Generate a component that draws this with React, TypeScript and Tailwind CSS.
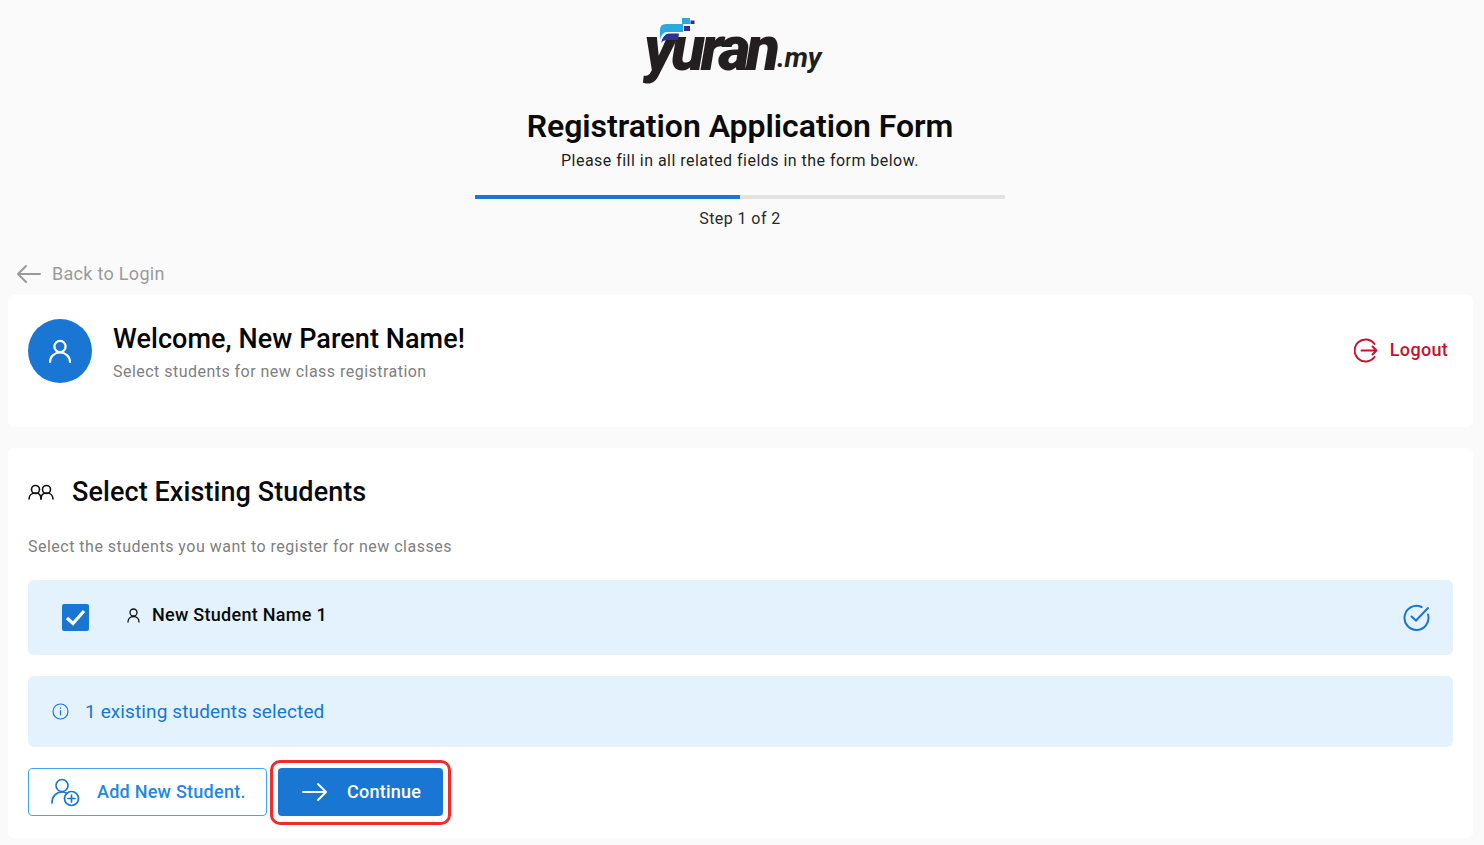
export default function App() {
  return (
    <div className="h-[845px] overflow-hidden bg-[#fafafa] pl-2 pr-[11px] font-['Roboto',sans-serif]">
      <div className="flex flex-col items-center pr-[1px]">
        <div className="relative mt-[18px] h-[57px] w-[180px] -translate-x-[7px]">
          <span className="absolute left-[1px] top-[-7px] text-[62px] leading-[76px] font-black italic tracking-[-4.200px] text-[#231f20]">yuran</span>
          <svg className="absolute left-0 top-0" width="60" height="30" viewBox="0 0 60 30">
            <path d="M17 22V12Q17 6 23 6H39V0H47V6H40V14H24Q19 14 17 22Z" fill="#29abe2" />
            <path d="M18 25Q20 16 26 15.500H36L35 22H25Q20 22 18 25Z" fill="#2e3192" />
            <rect x="41" y="8" width="6" height="5" fill="#2e3192" />
            <rect x="47.500" y="2.500" width="4" height="3.500" fill="#2e3192" />
          </svg>
          <span className="absolute left-[134px] top-[22px] text-[28px] leading-[36px] font-bold italic tracking-[-0.300px] text-[#231f20]">.my</span>
        </div>
        <h1 className="mt-[31px] text-[32px] leading-[40px] font-semibold tracking-[-0.03px] text-[#0b0b0b]">Registration Application Form</h1>
        <p className="mt-[5px] text-base leading-[20px] tracking-[0.47px] text-[#1f1f1f]">Please fill in all related fields in the form below.</p>
        <div className="mt-[24px] h-1 w-[530px] bg-[#e2e2e2]">
          <div className="h-1 w-1/2 bg-[#1976d2]" />
        </div>
        <p className="mt-[10px] text-base leading-[20px] tracking-[0.42px] text-[#2a2a2a]">Step 1 of 2</p>
      </div>

      <div className="mt-[33px] flex h-[24px] items-center gap-[11px] pl-[8px] text-[#9a9a9a]">
        <svg width="25" height="20" viewBox="0 0 25 20" fill="none" stroke="#9a9a9a" strokeWidth="2" strokeLinecap="round" strokeLinejoin="round">
          <path d="M24 10H2M10 2l-8 8 8 8" />
        </svg>
        <span className="text-lg leading-6 tracking-[0.3px]">Back to Login</span>
      </div>

      <section className="mt-[9px] flex h-[132px] rounded-md bg-white pl-5 pr-[25px] pt-6">
        <div className="flex h-16 w-16 shrink-0 items-center justify-center rounded-full bg-[#1976d2]">
          <svg width="24" height="26" viewBox="0 0 24 26" fill="none" stroke="white" strokeWidth="2.200" strokeLinecap="round">
            <circle cx="12" cy="8.500" r="5.600" />
            <path d="M2 24c0-5.500 4.500-9.500 10-9.500S22 18.500 22 24" />
          </svg>
        </div>
        <div className="ml-[21px] flex-1">
          <h2 className="mt-[3px] text-[27px] leading-[34px] font-medium tracking-[0.07px] text-[#050505]">Welcome, New Parent Name!</h2>
          <p className="mt-[6px] text-base leading-[20px] tracking-[0.47px] text-[#808080]">Select students for new class registration</p>
        </div>
        <div className="mt-[18px] flex h-[26px] items-center gap-[11px] text-[#c8102e]">
          <svg width="25" height="25" viewBox="0 0 25 25" fill="none" stroke="#c8102e" strokeWidth="2" strokeLinecap="round" strokeLinejoin="round">
            <path d="M20.500 6a11 11 0 1 0 0 13" />
            <path d="M7.500 12.500h15M18.500 8.500l4 4-4 4" />
          </svg>
          <span className="text-lg leading-6 font-medium tracking-[0.3px]">Logout</span>
        </div>
      </section>

      <section className="mt-[21px] h-[390px] rounded-md bg-white px-5 pt-[27px]">
        <div className="flex h-[34px] items-center gap-[18px]">
          <svg width="26" height="16" viewBox="0 0 26 16" fill="none" stroke="#111" strokeWidth="1.600" strokeLinecap="round">
            <circle cx="7.500" cy="5.500" r="4" />
            <path d="M1 15c0-4 3-6 6.500-6s5.500 2 5.500 6" />
            <circle cx="18.500" cy="5.500" r="4" />
            <path d="M13 15c0-4 2-6 5.500-6s6.500 2 6.500 6" />
          </svg>
          <h3 className="text-[27px] leading-[34px] font-medium tracking-[0.08px] text-[#0a0a0a]">Select Existing Students</h3>
        </div>
        <p className="mt-[28px] text-base leading-5 tracking-[0.49px] text-[#808080]">Select the students you want to register for new classes</p>

        <div className="mt-[23px] flex h-[75px] items-center rounded-md bg-[#e3f2fd] pl-[34px] pr-[23px]">
          <div className="flex h-[27px] w-[27px] items-center justify-center rounded-[2px] bg-[#1976d2]">
            <svg width="21" height="17" viewBox="0 0 21 17" fill="none" stroke="white" strokeWidth="3.200">
              <path d="M2 9l6 5.500L19 2" />
            </svg>
          </div>
          <svg className="ml-[38px] -mt-[4px]" width="13" height="15" viewBox="0 0 13 15" fill="none" stroke="#111" strokeWidth="1.300" strokeLinecap="round">
            <circle cx="6.500" cy="4.500" r="3.500" />
            <path d="M1 14c0-3.500 2.500-5.500 5.500-5.500S12 10.500 12 14" />
          </svg>
          <span className="ml-[12px] -mt-[5px] flex-1 text-lg leading-6 font-medium tracking-[0.28px] text-[#0a0a0a]">New Student Name 1</span>
          <svg width="27" height="27" viewBox="0 0 27 27" fill="none" stroke="#1976d2" strokeWidth="2" strokeLinecap="round">
            <path d="M25 10.500A12 12 0 1 1 18.500 3" />
            <path d="M8.500 12.500l4.500 4L25 4" />
          </svg>
        </div>

        <div className="mt-[21px] flex h-[71px] items-center rounded-md bg-[#e3f2fd] pl-6 text-[#1976d2]">
          <svg width="17" height="17" viewBox="0 0 17 17" fill="none" stroke="#1976d2" strokeWidth="1.200" strokeLinecap="round">
            <circle cx="8.500" cy="8.500" r="7.500" />
            <path d="M8.500 7.500v4.500M8.500 4.800v.4" />
          </svg>
          <span className="ml-[16px] text-[19px] leading-6 tracking-[0.12px]">1 existing students selected</span>
        </div>

        <div className="mt-[21px] flex items-start">
          <button className="flex h-[48px] w-[239px] items-center rounded-[4px] border border-[#42a5f5] bg-white pl-[21px] text-[#1e88e5]">
            <svg width="31" height="31" viewBox="0 0 31 31" fill="none" stroke="#1976d2" strokeWidth="1.700" strokeLinecap="round">
              <circle cx="12" cy="8.500" r="6" />
              <path d="M2 26c0-7 4.500-11 10-11 2 0 3.500.5 5 1.500" />
              <circle cx="21.500" cy="21.500" r="7" />
              <path d="M21.500 18v7M18 21.500h7" />
            </svg>
            <span className="ml-[16px] text-lg leading-6 font-medium tracking-[0.25px]">Add New Student.</span>
          </button>
          <div className="-mb-[9px] -mt-2 ml-[3px] rounded-[10px] border-[3px] border-[#f02b2b] px-[5px] pb-[6px] pt-[5px]">
            <button className="flex h-[48px] w-[165px] items-center rounded-[4px] bg-[#1976d2] pl-6 text-white">
              <svg width="26" height="20" viewBox="0 0 26 20" fill="none" stroke="white" strokeWidth="2" strokeLinecap="round" strokeLinejoin="round">
                <path d="M1 10h23M16 2l8 8-8 8" />
              </svg>
              <span className="ml-[19px] text-lg leading-6 font-medium tracking-[0.25px]">Continue</span>
            </button>
          </div>
        </div>
      </section>
    </div>
  );
}
